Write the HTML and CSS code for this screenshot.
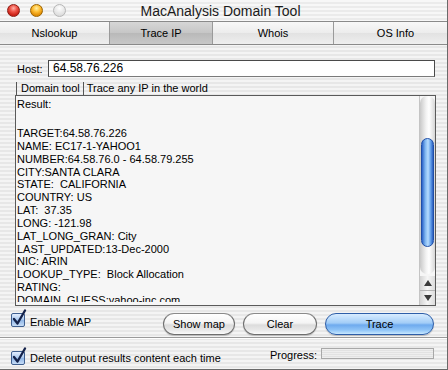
FILE: index.html
```html
<!Doctype html>
<html>
<head>
    <meta charset="UTF-8">
    <title>MacAnalysis Domain Tool</title>
    <link rel="stylesheet" href="styles.css">
</head>
<body>
<div class="window">
    <div class="titlebar">
        <div class="lights">
            <span class="light red"></span>
            <span class="light yellow"></span>
            <span class="light grey"></span>
        </div>
        <div class="title">MacAnalysis Domain Tool</div>
    </div>
    <div class="tabs">
        <div class="tab">Nslookup</div>
        <div class="tab active">Trace IP</div>
        <div class="tab">Whois</div>
        <div class="tab last">OS Info</div>
    </div>

    <div class="host-row">
        <label class="host-label">Host:</label>
        <div class="host-input">64.58.76.226</div>
    </div>

    <div class="group-head">
        <span class="seg">Domain tool</span><span class="seg second">Trace any IP in the world</span>
    </div>

    <div class="output">
        <div class="output-text">
            <div class="result-head">Result:</div>
            <div class="lines">TARGET:64.58.76.226
NAME: EC17-1-YAHOO1
NUMBER:64.58.76.0 - 64.58.79.255
CITY:SANTA CLARA
STATE:  CALIFORNIA
COUNTRY: US
LAT:  37.35
LONG: -121.98
LAT_LONG_GRAN: City
LAST_UPDATED:13-Dec-2000
NIC: ARIN
LOOKUP_TYPE:  Block Allocation
RATING:
DOMAIN_GUESS:yahoo-inc.com</div>
        </div>
        <div class="scrollbar">
            <div class="track">
                <div class="thumb"></div>
            </div>
            <div class="arrow up"></div>
            <div class="arrow down"></div>
        </div>
    </div>

    <div class="row row-one">
        <div class="check">
            <span class="box">
                <svg width="16" height="18" viewBox="0 0 16 18"><path d="M3 10 L6.5 14.5 L14 1.5" fill="none" stroke="#14224a" stroke-width="2.3" stroke-linecap="round" stroke-linejoin="round"/></svg>
            </span>
            <span class="check-text">Enable MAP</span>
        </div>
        <div class="btn btn-map">Show map</div>
        <div class="btn btn-clear">Clear</div>
        <div class="btn btn-trace">Trace</div>
    </div>

    <div class="sep"></div>

    <div class="row row-two">
        <div class="check">
            <span class="box">
                <svg width="16" height="18" viewBox="0 0 16 18"><path d="M3 10 L6.5 14.5 L14 1.5" fill="none" stroke="#14224a" stroke-width="2.3" stroke-linecap="round" stroke-linejoin="round"/></svg>
            </span>
            <span class="check-text">Delete output results content each time</span>
        </div>
        <div class="progress-label">Progress:</div>
        <div class="progress"></div>
    </div>
</div>
</body>
</html>
```

FILE: styles.css
```css
body{
    margin: 0;
    padding: 0;
    font-family: "Liberation Sans", Arial, sans-serif;
    font-size: 11px;
    color: #000;
}
.window{
    width: 447px;height: 369px;
    overflow: hidden;
    border-right: 1px solid #6a6a6a;
    border-bottom: 1px solid #6a6a6a;
    background: repeating-linear-gradient(to bottom, #f4f4f4 0, #f4f4f4 2px, #e7e7e7 2px, #e7e7e7 4px);
}

/* title bar */
.titlebar{
    height: 21px;
    display: flex;
    align-items: center;
    background: repeating-linear-gradient(to bottom, #f7f7f7 0, #f7f7f7 2px, #ebebeb 2px, #ebebeb 4px);
}
.lights{
    display: flex;
    gap: 10px;
    padding-left: 7px;
    width: 120px;
}
.light{
    width: 13px;height: 13px;
    border-radius: 50%;
    box-sizing: border-box;
}
.red{
    background: radial-gradient(circle at 50% 30%, #ffb3aa 0, #f0574b 35%, #c81d12 75%, #e0574b 100%);
    border: 1px solid #8c1c14;
}
.yellow{
    background: radial-gradient(circle at 50% 30%, #fff0a8 0, #ffc23a 35%, #e08a00 75%, #f3b53a 100%);
    border: 1px solid #9a6200;
}
.grey{
    background: radial-gradient(circle at 50% 30%, #ffffff 0, #eaeaea 45%, #d2d2d2 100%);
    border: 1px solid #b6b6b6;
}
.title{
    flex: 1;
    text-align: center;
    font-size: 14px;
    color: #1a1a1a;
    margin-left: -133px;
    padding-top: 1px;
}

/* tabs */
.tabs{
    display: grid;
    grid-template-columns: 110px 103px 121px 1fr;
    height: 22px;
    border-top: 1px solid #8a8a8a;
    border-bottom: 1px solid #8a8a8a;
}
.tab{
    line-height: 22px;
    text-align: center;
    border-right: 1px solid #9a9a9a;
    background: linear-gradient(to bottom, #f8f8f8, #ececec 50%, #e2e2e2 51%, #eeeeee);
}
.tab.active{
    background: linear-gradient(to bottom, #d6d6d6, #c6c6c6 50%, #b9b9b9 51%, #c8c8c8);
}
.tab.last{
    border-right: none;
    padding-left: 10px;
}

/* host */
.host-row{
    display: flex;
    align-items: center;
    margin-top: 15px;
    padding: 0 12px 0 17px;
}
.host-label{
    width: 31px;
}
.host-input{
    flex: 1;
    height: 15px;
    line-height: 15px;
    border: 1px solid #4a4a4a;
    border-bottom-color: #7a7a7a;
    background: #fff;
    font-size: 12px;
    padding-left: 4px;
}

.group-head{
    margin: 5px 0 0 16px;
    height: 13px;
    line-height: 13px;
    border-left: 1px solid #555;
    display: flex;
}
.seg{
    padding: 0 3px 0 4px;
}
.seg.second{
    border-left: 1px solid #555;
    padding-left: 3px;
}

/* output box */
.output{
    margin: 0 11px 0 15px;
    height: 209px;
    border: 1px solid #5a5a5a;
    background: #f6f6f6;
    display: flex;
}
.output-text{
    flex: 1;
    overflow: hidden;
    padding: 2px 0 0 1px;
    margin-bottom: 3px;
}
.result-head{
    line-height: 13px;
    margin-bottom: 16px;
}
.lines{
    white-space: pre;
    line-height: 12.85px;
}
.scrollbar{
    width: 15px;
    display: flex;
    flex-direction: column;
    border-left: 1px solid #c4c4c4;
}
.track{
    flex: 1;
    margin-bottom: 2px;
    border-radius: 7px;
    background: linear-gradient(to right, #c9c9c9, #f2f2f2 40%, #ffffff 60%, #d6d6d6);
    padding-top: 42px;
}
.thumb{
    margin: 0 1px;
    height: 109px;
    border-radius: 7px;
    box-sizing: border-box;
    border: 1px solid #1f4fa8;
    background: linear-gradient(to right, #2a62c8, #7fb6f0 30%, #b6dcff 55%, #5f9ce8 80%, #2c5fc0);
}
.arrow{
    height: 14px;
    display: flex;
    align-items: center;
    justify-content: center;
    background: linear-gradient(to right, #d4d4d4, #f6f6f6 50%, #dcdcdc);
}
.arrow.up{
    border-bottom: 1px solid #b4b4b4;
}
.arrow.up::after{
    content: "";
    border-left: 4px solid transparent;
    border-right: 4px solid transparent;
    border-bottom: 6px solid #3a3a3a;
}
.arrow.down::after{
    content: "";
    border-left: 4px solid transparent;
    border-right: 4px solid transparent;
    border-top: 6px solid #3a3a3a;
}

/* rows */
.row{
    display: flex;
    align-items: flex-start;
}
.row-one{
    padding: 7px 13px 0 0;
    height: 22px;
}
.row-two{
    padding: 9px 13px 0 0;
}
.check{
    display: flex;
    align-items: flex-start;
    margin-left: 11px;
}
.row-two .check{
    margin-top: 3px;
}
.box{
    width: 14px;height: 14px;
    box-sizing: border-box;
    border: 1px solid #3f5f8f;
    border-radius: 2px;
    background: linear-gradient(to bottom, #e4efff, #a9c8ee 50%, #8fb5e6 51%, #c7ddf7);
    position: relative;
}
.box svg{
    position: absolute;
    left: -1px;top: -5px;
}
.check-text{
    margin-left: 5px;
    padding-top: 3px;
    line-height: 13px;
}
.row-two .check-text{
    padding-top: 1px;
}

.btn{
    height: 20px;
    line-height: 20px;
    text-align: center;
    border-radius: 11px;
    border: 1px solid #6e6e6e;
    border-top-color: #8a8a8a;
    background: linear-gradient(to bottom, #ffffff, #f4f4f4 45%, #dcdcdc 55%, #e8e8e8 80%, #fbfbfb);
    box-shadow: 0 1px 1px rgba(0,0,0,0.2);
}
.btn-map{
    margin-left: auto;
    width: 70px;
}
.btn-clear{
    margin-left: 8px;
    width: 72px;
}
.btn-trace{
    margin-left: 8px;
    width: 107px;
    border-color: #2e5ea8;
    background: linear-gradient(to bottom, #d8ecff, #a2cdf7 45%, #6eaaee 55%, #8fc4f7 80%, #c8e8ff);
}

.sep{
    margin-top: 2px;
    height: 1px;
    border-top: 1px solid #9a9a9a;
    background: #fff;
}

.progress-label{
    margin-left: auto;
    line-height: 14px;
}
.progress{
    margin-left: 4px;
    width: 111px;height: 9px;
    border: 1px solid #a8a8a8;
    background: repeating-linear-gradient(to bottom, #eeeeee 0, #eeeeee 1px, #e2e2e2 1px, #e2e2e2 2px);
}
```
